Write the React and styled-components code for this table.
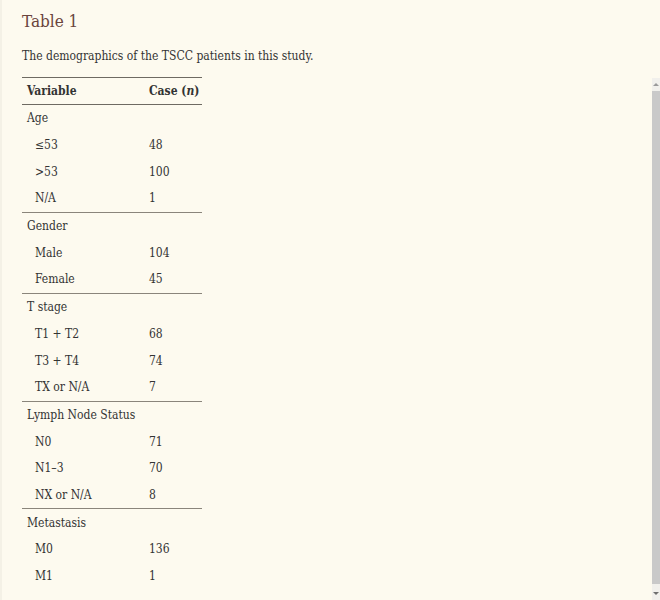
import React from "react";
import styled, { createGlobalStyle } from "styled-components";

const GlobalStyle = createGlobalStyle`
  html, body {
    margin: 0;
    padding: 0;
    background: #fdfaef;
    overflow: hidden;
  }
`;

const Page = styled.div`
  display: flex;
  width: 660px;
  height: 600px;
  background: #fdfaef;
  font-family: "DejaVu Serif Condensed", "DejaVu Serif", serif;
  color: #333333;
  border-left: 2px solid #f4f1e6;
  box-sizing: border-box;
`;

const Content = styled.div`
  flex: 1;
  padding: 9px 0 0 20px;
`;

const Title = styled.h2`
  margin: 0;
  font-size: 17px;
  font-weight: normal;
  color: #6a443d;
  line-height: 24px;
`;

const Caption = styled.p`
  margin: 14px 0 12px;
  font-size: 12px;
  line-height: 18px;
`;

const Table = styled.table`
  border-collapse: collapse;
  table-layout: fixed;
  width: 180px;
  font-size: 12px;
  border-top: 1.5px solid #6e6a62;
`;

const Head = styled.thead`
  th {
    font-weight: bold;
    text-align: left;
    white-space: nowrap;
    height: 26px;
    padding: 0 0 0 5px;
    border-bottom: 1.5px solid #6e6a62;
  }
  th + th {
    padding-left: 0;
  }
`;

const Row = styled.tr`
  border-top: ${(p) => (p.$divide ? "1px solid #8a857b" : "none")};
  td {
    height: 26.7px;
    padding: 0;
    line-height: 18px;
    white-space: nowrap;
  }
`;

const Label = styled.td`
  padding-left: ${(p) => (p.$sub ? "13px" : "5px")} !important;
`;

const Value = styled.td``;

const Scroll = styled.div`
  width: 8px;
  display: flex;
  flex-direction: column;
  padding-top: 78px;
`;

const Track = styled.div`
  flex: 1;
  background: #f1f0ec;
  display: flex;
  flex-direction: column;
  align-items: center;
  padding: 5px 0 5px;
`;

const Arrow = styled.div`
  width: 0;
  height: 0;
  border-left: 3px solid transparent;
  border-right: 3px solid transparent;
  ${(p) =>
    p.$down
      ? "border-top: 3px solid #6f6f6f;"
      : "border-bottom: 3px solid #9a9a9a;"}
`;

const Thumb = styled.div`
  flex: 1;
  width: 100%;
  margin: 5px 0 8px;
  background: #c9c9c9;
`;

const groups = [
  { name: "Age", rows: [["≤53", 48], [">53", 100], ["N/A", 1]] },
  { name: "Gender", rows: [["Male", 104], ["Female", 45]] },
  { name: "T stage", rows: [["T1 + T2", 68], ["T3 + T4", 74], ["TX or N/A", 7]] },
  { name: "Lymph Node Status", rows: [["N0", 71], ["N1–3", 70], ["NX or N/A", 8]] },
  { name: "Metastasis", rows: [["M0", 136], ["M1", 1]] },
];

export default function App() {
  return (
    <Page>
      <GlobalStyle />
      <Content>
        <Title>Table 1</Title>
        <Caption>The demographics of the TSCC patients in this study.</Caption>
        <Table>
          <colgroup>
            <col style={{ width: 127 }} />
            <col style={{ width: 53 }} />
          </colgroup>
          <Head>
            <tr>
              <th>Variable</th>
              <th>
                Case (<i>n</i>)
              </th>
            </tr>
          </Head>
          <tbody>
            {groups.map((g, gi) => (
              <React.Fragment key={g.name}>
                <Row $divide={gi > 0}>
                  <Label>{g.name}</Label>
                  <Value />
                </Row>
                {g.rows.map(([k, v]) => (
                  <Row key={k}>
                    <Label $sub>{k}</Label>
                    <Value>{v}</Value>
                  </Row>
                ))}
              </React.Fragment>
            ))}
          </tbody>
        </Table>
      </Content>
      <Scroll>
        <Track>
          <Arrow />
          <Thumb />
          <Arrow $down />
        </Track>
      </Scroll>
    </Page>
  );
}
